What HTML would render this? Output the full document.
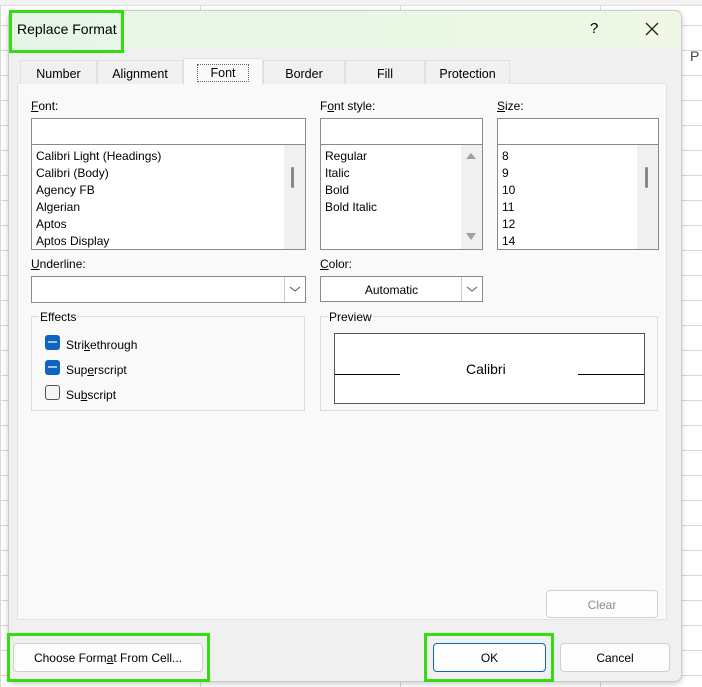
<html><head><style>
body{margin:0;width:702px;height:687px;overflow:hidden;background:#fff;font-family:"Liberation Sans",sans-serif;font-size:12px;color:#000;position:relative}
.a{position:absolute}
.grid{background-image:linear-gradient(#d8d8d8 1px,transparent 1px),linear-gradient(90deg,#d8d8d8 1px,transparent 1px);background-size:200px 25px;}
.box{position:absolute;background:#fff;border:1px solid #8a8a8a;box-sizing:border-box}
.btn{position:absolute;background:#fdfdfd;border:1px solid #d0d0d0;border-radius:4px;box-sizing:border-box;text-align:center;font-size:12px}
.hl{position:absolute;border:3px solid #33dd11;box-sizing:border-box}
.tab{position:absolute;top:60px;height:24px;line-height:26px;text-align:center;font-size:12.5px;border:1px solid #e0e0e0;border-bottom:none;background:#f0f0f0;box-sizing:border-box}
.lbl{position:absolute;font-size:12px}
.it{position:absolute;font-size:12px;line-height:17px}
.cb{position:absolute;width:15px;height:15px;border-radius:3px;box-sizing:border-box}
</style></head><body>
<div class="a grid" style="left:0;top:0;width:702px;height:687px;background-color:#fff"></div>
<div class="a" style="left:0;top:0;width:702px;height:5px;background:#f3f3f3;border-bottom:1px solid #ddd"></div>
<div class="a" style="left:690px;top:48px;font-size:14px;color:#444">P</div>
<div class="a" style="left:8px;top:10px;width:674px;height:672px;background:#f0f0f0;border:1px solid #ccc;border-radius:7px;box-sizing:border-box;box-shadow:0 2px 6px rgba(0,0,0,.2)"></div>
<div class="a" style="left:9px;top:11px;width:672px;height:38px;background:linear-gradient(90deg,#e6f5e6,#eef8e4);border-radius:7px 7px 0 0"></div>
<div class="a" style="left:17px;top:21px;font-size:14px">Replace Format</div>
<div class="a" style="left:590px;top:20px;font-size:15px">?</div>
<svg class="a" style="left:645px;top:22px" width="14" height="14"><path d="M1 1L13 13M13 1L1 13" stroke="#222" stroke-width="1.3"/></svg>
<div class="a" style="left:17px;top:83px;width:650px;height:537px;background:#f9f9f9;border:1px solid #e3e3e3;box-sizing:border-box"></div>
<div class="tab" style="left:20px;width:77px">Number</div>
<div class="tab" style="left:97px;width:86px">Alignment</div>
<div class="tab" style="left:183px;width:80px;top:58px;height:27px;background:#f9f9f9;line-height:28px"><span style="outline:1px dotted #666;padding:1px 12px">Font</span></div>
<div class="tab" style="left:263px;width:82px">Border</div>
<div class="tab" style="left:345px;width:80px">Fill</div>
<div class="tab" style="left:425px;width:85px">Protection</div>
<div class="lbl" style="left:31px;top:99px"><u>F</u>ont:</div>
<div class="lbl" style="left:320px;top:99px">F<u>o</u>nt style:</div>
<div class="lbl" style="left:497px;top:99px"><u>S</u>ize:</div>
<div class="box" style="left:31px;top:118px;width:275px;height:27px"></div>
<div class="box" style="left:31px;top:144px;width:275px;height:106px"></div>
<div class="a" style="left:284px;top:145px;width:21px;height:104px;background:#f0f0f0"></div>
<div class="a" style="left:291px;top:167px;width:3px;height:21px;background:#888;border-radius:2px"></div>
<div class="it" style="left:36px;top:148px">Calibri Light (Headings)<br>Calibri (Body)<br>Agency FB<br>Algerian<br>Aptos<br>Aptos Display</div>
<div class="box" style="left:320px;top:118px;width:163px;height:27px"></div>
<div class="box" style="left:320px;top:144px;width:163px;height:106px"></div>
<div class="a" style="left:461px;top:145px;width:21px;height:104px;background:#f0f0f0"></div>
<svg class="a" style="left:464px;top:150px" width="14" height="94"><path d="M2 9L7 3L12 9Z M2 83L7 90L12 83Z" fill="#a0a0a0"/></svg>
<div class="it" style="left:325px;top:148px">Regular<br>Italic<br>Bold<br>Bold Italic</div>
<div class="box" style="left:497px;top:118px;width:162px;height:27px"></div>
<div class="box" style="left:497px;top:144px;width:162px;height:106px"></div>
<div class="a" style="left:637px;top:145px;width:21px;height:104px;background:#f0f0f0"></div>
<div class="a" style="left:645px;top:167px;width:3px;height:21px;background:#888;border-radius:2px"></div>
<div class="it" style="left:502px;top:148px">8<br>9<br>10<br>11<br>12<br>14</div>
<div class="lbl" style="left:31px;top:257px"><u>U</u>nderline:</div>
<div class="box" style="left:31px;top:276px;width:275px;height:27px"></div>
<div class="a" style="left:284px;top:277px;width:21px;height:25px;border-left:1px solid #ccc"></div>
<svg class="a" style="left:289px;top:285px" width="12" height="8"><path d="M1 2L6 6L11 2" stroke="#555" fill="none"/></svg>
<div class="lbl" style="left:320px;top:257px"><u>C</u>olor:</div>
<div class="box" style="left:320px;top:276px;width:163px;height:26px;text-align:center;line-height:26px;padding-right:20px">Automatic</div>
<div class="a" style="left:461px;top:277px;width:21px;height:24px;border-left:1px solid #ccc"></div>
<svg class="a" style="left:466px;top:285px" width="12" height="8"><path d="M1 2L6 6L11 2" stroke="#555" fill="none"/></svg>
<div class="a" style="left:31px;top:316px;width:274px;height:95px;border:1px solid #dcdcdc;box-sizing:border-box"></div>
<div class="lbl" style="left:39px;top:310px;background:#f9f9f9;padding:0 1px">Effects</div>
<div class="cb" style="left:45px;top:335px;background:#0e64c0"><div style="margin:6px 3px 0;height:2px;background:#9cc2ea"></div></div>
<div class="lbl" style="left:66px;top:338px">Stri<u>k</u>ethrough</div>
<div class="cb" style="left:45px;top:360px;background:#0e64c0"><div style="margin:6px 3px 0;height:2px;background:#9cc2ea"></div></div>
<div class="lbl" style="left:66px;top:363px">Sup<u>e</u>rscript</div>
<div class="cb" style="left:45px;top:385px;border:1px solid #555;background:#f6f6f6"></div>
<div class="lbl" style="left:66px;top:388px">Su<u>b</u>script</div>
<div class="a" style="left:320px;top:316px;width:338px;height:95px;border:1px solid #dcdcdc;box-sizing:border-box"></div>
<div class="lbl" style="left:328px;top:310px;background:#f9f9f9;padding:0 1px">Preview</div>
<div class="a" style="left:334px;top:333px;width:311px;height:71px;background:#fff;border:1px solid #555;box-sizing:border-box"></div>
<div class="a" style="left:335px;top:374px;width:65px;height:1px;background:#000"></div>
<div class="a" style="left:578px;top:374px;width:66px;height:1px;background:#000"></div>
<div class="a" style="left:466px;top:361px;font-size:14px">Calibri</div>
<div class="btn" style="left:546px;top:590px;width:112px;height:28px;line-height:28px;color:#8a8a8a">Clear</div>
<div class="btn" style="left:13px;top:643px;width:190px;height:29px;line-height:29px">Choose Form<u>a</u>t From Cell...</div>
<div class="btn" style="left:433px;top:643px;width:113px;height:29px;line-height:29px;border-color:#0e64c0">OK</div>
<div class="btn" style="left:560px;top:643px;width:110px;height:29px;line-height:29px">Cancel</div>
<div class="hl" style="left:9px;top:10px;width:115px;height:43px"></div>
<div class="hl" style="left:7px;top:633px;width:203px;height:49px"></div>
<div class="hl" style="left:424px;top:633px;width:130px;height:49px"></div>
</body></html>
